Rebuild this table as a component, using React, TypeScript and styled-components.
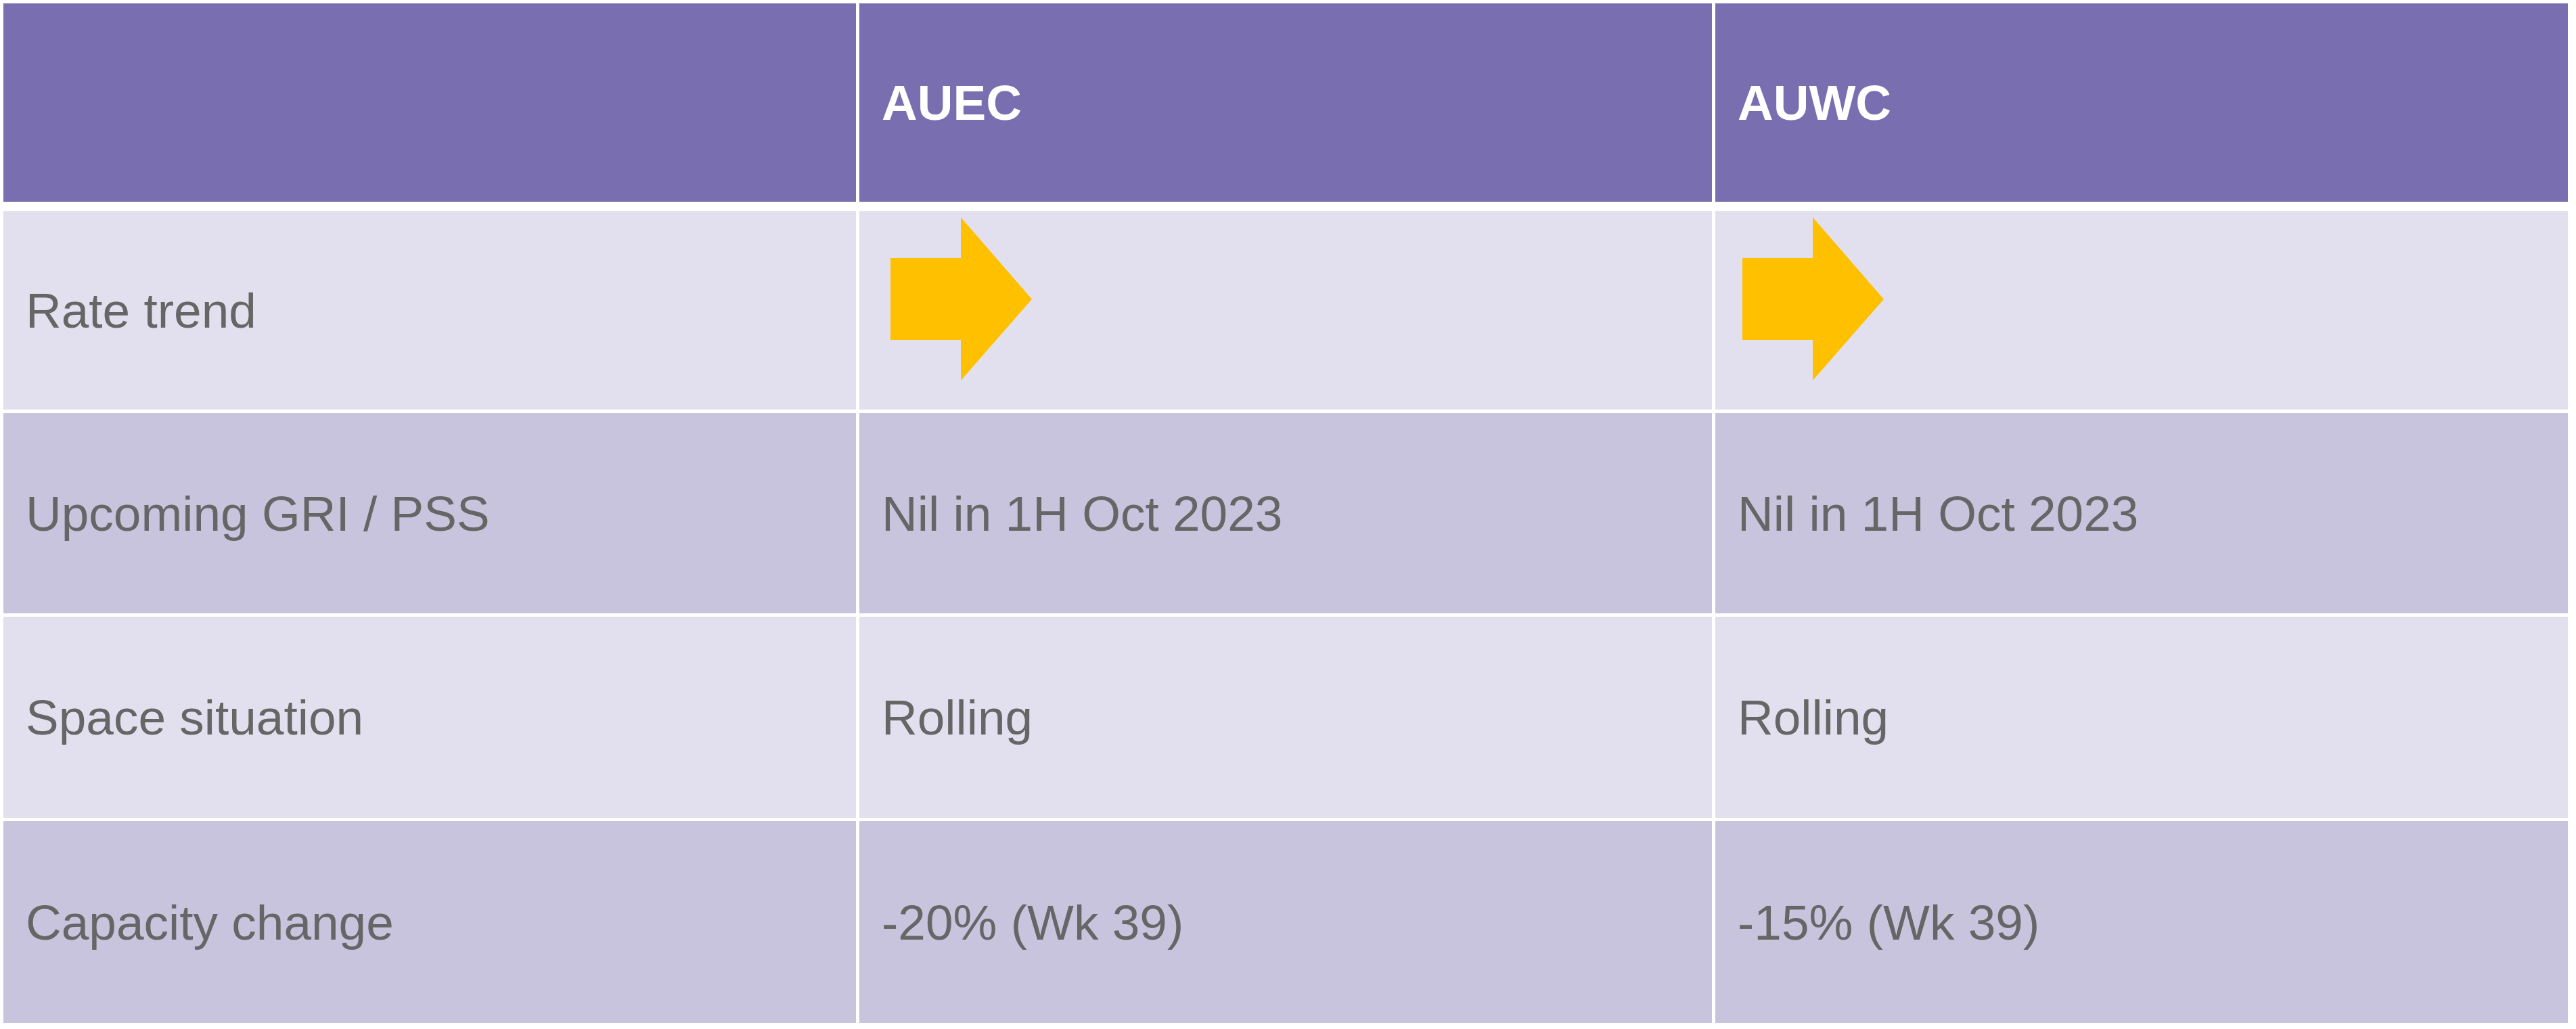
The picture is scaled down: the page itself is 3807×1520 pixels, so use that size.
import React from "react";
import styled, { createGlobalStyle } from "styled-components";

const GlobalStyle = createGlobalStyle`
  html, body { margin: 0; padding: 0; background: #ffffff; }
  body { font-family: "Liberation Sans", Arial, sans-serif; }
`;

const Page = styled.div`
  width: 3807px;
  height: 1520px;
  padding: 5px 0 0 5px;
  box-sizing: border-box;
  background: #ffffff;
`;

const Table = styled.div`
  width: 3790px;
  display: flex;
  flex-direction: column;
  gap: 5px;
`;

const Row = styled.div<{ $height: number; $after?: number }>`
  display: grid;
  grid-template-columns: 1260px 1260px 1260px;
  column-gap: 5px;
  height: ${(p) => p.$height}px;
  margin-bottom: ${(p) => p.$after ?? 0}px;
`;

const tones = {
  head: "#796EB0",
  light: "#E2E0EE",
  dark: "#C8C4DE",
};

const Cell = styled.div<{ $tone: keyof typeof tones }>`
  background: ${(p) => tones[p.$tone]};
  display: flex;
  align-items: center;
  padding-left: 33px;
  box-sizing: border-box;
  font-size: 73px;
  line-height: 1;
  color: ${(p) => (p.$tone === "head" ? "#ffffff" : "#666666")};
  font-weight: ${(p) => (p.$tone === "head" ? 700 : 400)};
  white-space: nowrap;
`;

const ArrowCell = styled.div<{ $offset: number }>`
  background: ${tones.light};
  display: flex;
  align-items: flex-start;
  padding: 9px 0 0 ${(p) => p.$offset}px;
  box-sizing: border-box;
`;

const ArrowSvg = styled.svg`
  display: block;
  width: 209px;
  height: 241px;
`;

const TrendArrow = () => (
  <ArrowSvg viewBox="0 0 209 241">
    <polygon
      points="0,60 104,60 104,0 209,121 104,241 104,181 0,181"
      fill="#FFC000"
    />
  </ArrowSvg>
);

type DataRow = { label: string; aUEC: string; aUWC: string; tone: "light" | "dark"; height: number };

const rows: DataRow[] = [
  { label: "Upcoming GRI / PSS", aUEC: "Nil in 1H Oct 2023", aUWC: "Nil in 1H Oct 2023", tone: "dark", height: 296 },
  { label: "Space situation", aUEC: "Rolling", aUWC: "Rolling", tone: "light", height: 297 },
  { label: "Capacity change", aUEC: "-20% (Wk 39)", aUWC: "-15% (Wk 39)", tone: "dark", height: 298 },
];

export default function App() {
  return (
    <>
      <GlobalStyle />
      <Page>
        <Table>
          <Row $height={293} $after={9}>
            <Cell $tone="head" />
            <Cell $tone="head">AUEC</Cell>
            <Cell $tone="head">AUWC</Cell>
          </Row>
          <Row $height={293}>
            <Cell $tone="light">Rate trend</Cell>
            <ArrowCell $offset={46}>
              <TrendArrow />
            </ArrowCell>
            <ArrowCell $offset={40}>
              <TrendArrow />
            </ArrowCell>
          </Row>
          {rows.map((r) => (
            <Row key={r.label} $height={r.height}>
              <Cell $tone={r.tone}>{r.label}</Cell>
              <Cell $tone={r.tone}>{r.aUEC}</Cell>
              <Cell $tone={r.tone}>{r.aUWC}</Cell>
            </Row>
          ))}
        </Table>
      </Page>
    </>
  );
}
